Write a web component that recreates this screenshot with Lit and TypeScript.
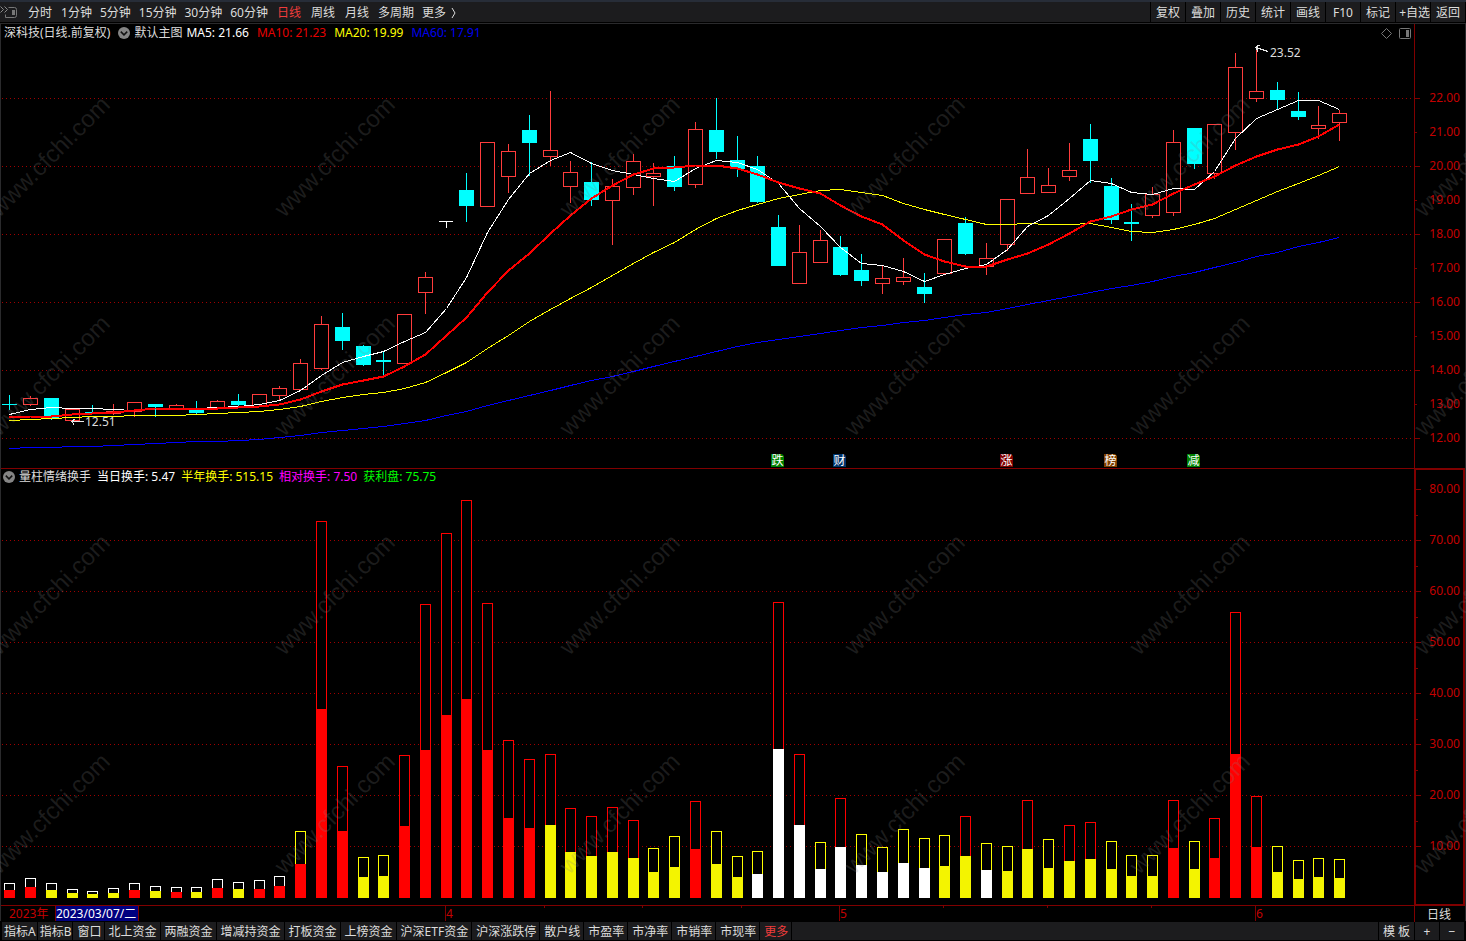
import { LitElement, html, svg, css } from "lit";
import { customElement, property } from "lit/decorators.js";
import { styleMap } from "lit/directives/style-map.js";

type Candle = [kind: "u" | "d" | "t", high: number, top: number, bottom: number, low: number];
type Bar = [top: number, split: number, colors: string];

/* Horizontal position of the k-th trading day. */
const dayX = (k: number) => Math.floor(9.8 + (k * 187) / 9);

const PLOT_W = 1414;
const MAIN_TOP = 24;
const MAIN_H = 444;
const SUB_TOP = 469;
const SUB_H = 436;

const candles: Candle[] = [
  ["d", 395, 404, 405, 410], ["u", 396, 398, 405, 406], ["d", 398, 398, 418, 420], ["u", 409, 409, 421, 421],
  ["d", 405, 412, 413, 414], ["u", 404, 411, 414, 415], ["u", 402, 402, 412, 417], ["d", 404, 404, 407, 417],
  ["u", 404, 405, 409, 409], ["d", 401, 409, 413, 414], ["u", 400, 401, 408, 408], ["d", 394, 401, 405, 406],
  ["u", 394, 394, 407, 407], ["u", 386, 388, 396, 400], ["u", 359, 363, 390, 390], ["u", 316, 324, 369, 370],
  ["d", 313, 327, 341, 350], ["d", 345, 346, 365, 366], ["d", 351, 360, 362, 375], ["u", 314, 314, 364, 364],
  ["u", 272, 277, 293, 314], ["t", 221, 221, 222, 228], ["d", 173, 190, 206, 222], ["u", 142, 142, 207, 207],
  ["u", 144, 151, 177, 193], ["d", 115, 130, 143, 176], ["u", 91, 150, 157, 166], ["u", 161, 172, 187, 203],
  ["d", 162, 182, 200, 206], ["u", 179, 186, 201, 245], ["u", 154, 161, 188, 195], ["u", 163, 173, 177, 206],
  ["d", 156, 166, 187, 191], ["u", 122, 129, 185, 188], ["d", 98, 130, 152, 159], ["d", 136, 160, 169, 177],
  ["d", 156, 166, 202, 203], ["d", 215, 227, 266, 266], ["u", 225, 252, 284, 284], ["u", 230, 240, 263, 263],
  ["d", 236, 247, 275, 276], ["d", 254, 270, 281, 286], ["u", 266, 278, 284, 294], ["u", 258, 277, 282, 285],
  ["d", 273, 287, 294, 303], ["u", 239, 239, 274, 275], ["d", 217, 223, 254, 255], ["u", 243, 258, 267, 275],
  ["u", 199, 199, 245, 251], ["u", 149, 177, 194, 194], ["u", 168, 185, 193, 193], ["u", 143, 170, 177, 181],
  ["d", 124, 139, 161, 183], ["d", 178, 186, 220, 224], ["d", 204, 222, 224, 241], ["u", 187, 194, 216, 218],
  ["u", 130, 142, 213, 216], ["d", 128, 128, 164, 169], ["u", 124, 124, 174, 179], ["u", 53, 67, 133, 150],
  ["u", 48, 91, 99, 102], ["d", 82, 90, 100, 110], ["d", 92, 111, 117, 120], ["u", 106, 125, 129, 139],
  ["u", 110, 113, 123, 141],
];

const ma5 = [414, 409, 407, 408, 408, 409, 410, 408, 408, 408, 407, 406, 404, 400, 390, 375, 362, 356, 351, 341, 332, 308, 277, 232, 199, 173, 160, 152, 163, 170, 174, 178, 181, 168, 160, 162, 169, 183, 208, 226, 247, 263, 265, 271, 281, 274, 268, 264, 249, 226, 215, 198, 180, 183, 192, 194, 188, 189, 171, 138, 118, 109, 100, 100, 109];
const ma10 = [417, 416, 416, 414, 413, 412, 410, 408, 408, 408, 408, 407, 406, 404, 399, 391, 384, 380, 376, 366, 354, 335, 317, 292, 270, 253, 233, 215, 198, 185, 174, 168, 167, 165, 165, 168, 174, 182, 188, 193, 205, 216, 224, 240, 254, 261, 266, 266, 259, 253, 244, 233, 221, 216, 209, 204, 193, 184, 176, 165, 156, 149, 144, 136, 124];
const ma20 = [420, 419, 418, 417, 416, 416, 415, 415, 415, 414, 413, 412, 411, 409, 406, 401, 397, 394, 392, 388, 382, 372, 362, 348, 335, 321, 309, 298, 287, 275, 263, 252, 242, 229, 218, 210, 204, 198, 194, 190, 189, 192, 195, 203, 209, 214, 219, 224, 224, 223, 224, 224, 223, 227, 231, 232, 229, 224, 218, 209, 200, 191, 183, 175, 166];
const ma60 = [448, 447, 447, 446, 446, 445, 444, 443, 442, 441, 441, 440, 439, 437, 435, 432, 430, 428, 426, 423, 420, 415, 411, 405, 400, 395, 390, 385, 380, 376, 371, 366, 361, 356, 351, 346, 342, 339, 336, 333, 330, 327, 325, 322, 320, 317, 314, 312, 308, 304, 300, 296, 292, 288, 285, 281, 276, 272, 267, 262, 256, 252, 246, 242, 237];

/* Two letters per bar: outline colour, then fill colour. */
const bars: Bar[] = [
  [883, 890, "WR"], [878, 887, "WR"], [883, 890, "WY"], [889, 893, "WY"], [891, 894, "WY"], [888, 893, "WY"],
  [883, 890, "WR"], [886, 891, "WY"], [887, 892, "WR"], [887, 892, "WY"], [879, 888, "WR"], [882, 889, "WY"],
  [880, 889, "WR"], [876, 886, "WR"], [831, 864, "YR"], [521, 709, "RR"], [766, 831, "RR"], [857, 877, "YY"],
  [855, 876, "YY"], [755, 826, "RR"], [604, 750, "RR"], [533, 715, "RR"], [500, 699, "RR"], [603, 750, "RR"],
  [740, 818, "RR"], [759, 828, "RR"], [754, 825, "RY"], [808, 852, "RY"], [816, 856, "RY"], [807, 852, "RY"],
  [820, 858, "RY"], [848, 872, "YY"], [836, 867, "YY"], [801, 849, "RR"], [831, 864, "YY"], [856, 877, "YY"],
  [851, 874, "YW"], [602, 749, "RW"], [754, 825, "RW"], [842, 869, "YW"], [798, 847, "RW"], [834, 865, "YW"],
  [847, 872, "YW"], [829, 863, "YW"], [838, 868, "YW"], [835, 866, "YY"], [816, 856, "RY"], [843, 870, "YW"],
  [846, 871, "YY"], [800, 849, "RY"], [839, 868, "YY"], [825, 861, "RY"], [822, 859, "RY"], [841, 869, "YY"],
  [855, 876, "YY"], [855, 876, "YY"], [800, 848, "RR"], [841, 869, "YY"], [818, 858, "RR"], [612, 754, "RR"],
  [796, 847, "RR"], [846, 872, "YY"], [860, 879, "YY"], [858, 877, "YY"], [859, 878, "YY"],
];
const BAR_BASE = 898;

const events = [
  { day: 37, text: "跌", tone: "green" },
  { day: 40, text: "财", tone: "navy" },
  { day: 48, text: "涨", tone: "maroon" },
  { day: 53, text: "榜", tone: "brown" },
  { day: 57, text: "减", tone: "green" },
];

const pct = (v: number, total: number) => `${(v / total) * 100}%`;

const path = (ys: number[]) => ys.map((y, k) => `${dayX(k) + 0.5},${y + 0.5}`).join(" ");

const chevronIcon = html`<svg class="chev" viewBox="0 0 13 13" width="12" height="12" aria-hidden="true">
  <circle cx="6.5" cy="6.5" r="6.5" fill="#858585" />
  <path d="M3 5l3.5 3.5L10 5" fill="none" stroke="#111" stroke-width="1.6" />
</svg>`;

const base = css`
  * { box-sizing: border-box; }
  button {
    appearance: none;
    border: 0;
    margin: 0;
    padding: 0;
    font: inherit;
    color: inherit;
    background: none;
    white-space: nowrap;
    cursor: pointer;
  }
`;

@customElement("top-bar")
export class TopBar extends LitElement {
  static styles = [base, css`
    :host {
      display: flex;
      height: 24px;
      border-top: 2px solid #272d38;
      border-bottom: 1px solid #2a2a2c;
      background: #000;
      color: #dcdcdc;
      padding: 0 1px 1px 0;
    }
    .left { flex: 1; display: flex; align-items: stretch; background: #1c1c1e; min-width: 0; overflow: hidden; }
    .left button { padding-top: 2px; }
    .left .dock { width: 23px; flex: none; display: flex; align-items: center; padding: 0; }
    .left .wide { padding-left: 5px; padding-right: 5px; }
    .left .slim { padding-left: 4px; padding-right: 4px; }
    .active { color: #f03c3c; }
    .right { display: flex; gap: 1px; padding-left: 1px; }
    .right button { width: 34px; padding-top: 2px; background: #1c1c1e; overflow: hidden; display: flex; justify-content: center; align-items: center; }
    .right .end { justify-content: flex-end; }
  `];

  render() {
    const tf: [string, string][] = [
      ["分时", "wide"], ["1分钟", "slim"], ["5分钟", "slim"], ["15分钟", "slim"], ["30分钟", "slim"], ["60分钟", "slim"],
      ["日线", "wide active"], ["周线", "wide"], ["月线", "wide"], ["多周期", "slim"], ["更多", "slim"],
    ];
    const tools = ["复权", "叠加", "历史", "统计", "画线", "F10", "标记", "+自选", "返回"];
    return html`
      <nav class="left">
        <button class="dock" aria-label="展开侧栏">
          <svg width="18" height="14" viewBox="0 0 18 14">
            <path d="M8.5 2.5h6q2 0 2 2v6q0 2-2 2h-9v-3" fill="none" stroke="#777" />
            <rect x="12" y="5" width="3" height="5" fill="#777" />
            <path d="M0.5 1.5l3 3-3 3M4.5 1.5l3 3-3 3" fill="none" stroke="#8a8a8a" />
          </svg>
        </button>
        ${tf.map(([t, c]) => html`<button class=${c}>${t}</button>`)}
        <svg width="8" height="20" viewBox="0 0 8 20" aria-hidden="true"><path d="M2 6l3 5-3 5" fill="none" stroke="#dcdcdc" /></svg>
      </nav>
      <div class="right">${tools.map((t) => html`<button class=${t === "+自选" ? "end" : ""}>${t}</button>`)}</div>
    `;
  }
}

@customElement("value-axis")
export class ValueAxis extends LitElement {
  @property({ attribute: false }) labels: string[] = [];
  @property({ attribute: false }) major: number[] = [];
  @property({ attribute: false }) minor: number[] = [];
  @property({ type: Number }) origin = 0;
  @property({ type: Number }) span = 1;
  @property() rows = "";

  static styles = [base, css`
    :host { display: grid; position: relative; color: #c40000; min-height: 0; }
    svg { position: absolute; inset: 0; width: 100%; height: 100%; }
    .labels { display: grid; text-align: right; padding-right: var(--label-inset, 6px); min-height: 0; }
    .labels span { line-height: 16px; margin-top: -8px; }
  `];

  render() {
    return html`
      <svg viewBox="0 ${this.origin} 52 ${this.span}" preserveAspectRatio="none" shape-rendering="crispEdges" aria-hidden="true">
        ${this.major.map((y) => svg`<rect x="0" y=${y} width="5" height="1" fill="#800000" />`)}
        ${this.minor.map((y) => svg`<rect x="0" y=${y} width="2" height="1" fill="#800000" />`)}
      </svg>
      <div class="labels" style=${styleMap({ gridTemplateRows: this.rows })}>
        <i></i>${this.labels.map((l) => html`<span>${l}</span>`)}
      </div>
    `;
  }
}

@customElement("price-panel")
export class PricePanel extends LitElement {
  static styles = [base, css`
    :host { display: grid; grid-template-columns: minmax(0, 1fr) 52px; border-bottom: 1px solid #800000; min-height: 0; }
    .plot { position: relative; min-height: 0; min-width: 0; overflow: hidden; }
    .chart { position: absolute; inset: 0; width: 100%; height: 100%; }
    .axis { border-left: 1px solid #800000; }
    .legend { position: absolute; left: 4px; top: 0; height: 18px; display: flex; align-items: center; gap: 8px; white-space: nowrap; color: #dcdcdc; }
    .group { display: flex; align-items: center; gap: 4px; }
    .values { display: flex; gap: 8px; }
    .chev { display: block; }
    .white { color: #fff; }
    .red { color: #e60000; }
    .yellow { color: #ff0; }
    .blue { color: #0000f0; }
    .corner { position: absolute; right: 3px; top: 3px; display: flex; gap: 6px; }
    .corner button { display: block; height: 13px; }
    .note { position: absolute; color: #dcdcdc; line-height: 16px; margin-top: -8px; }
    .badge {
      position: absolute; bottom: 1px; width: 13px; height: 13px; margin-left: -7px;
      display: grid; place-items: center; font-size: 12px; line-height: 13px; color: #fff;
      clip-path: polygon(0 0, 11px 0, 100% 2px, 100% 100%, 0 100%);
    }
    .green { background: #008000; }
    .navy { background: #00336a; }
    .maroon { background: #800000; }
    .brown { background: #804000; }
  `];

  private candle([kind, high, top, bottom, low]: Candle, k: number) {
    const x = dayX(k);
    if (kind === "u") {
      return svg`
        <rect x=${x} y=${high} width="1" height=${low - high} fill="#ff3c3c" />
        <rect x=${x - 6.5} y=${top + 0.5} width="14" height=${bottom - top - 1} fill="#000" stroke="#ff3c3c" />`;
    }
    const c = kind === "d" ? "#00ffff" : "#ffffff";
    return svg`
      <rect x=${x} y=${high} width="1" height=${low - high} fill=${c} />
      <rect x=${x - 7} y=${top} width=${kind === "d" ? 15 : 14} height=${bottom - top} fill=${c} />`;
  }

  render() {
    const grid = [98, 166, 234, 302, 370, 438];
    const labels = ["22", "21", "20", "19", "18", "17", "16", "15", "14", "13", "12"].map((v) => `${v}.00`);
    return html`
      <div class="plot">
        <svg class="chart" viewBox="0 ${MAIN_TOP} ${PLOT_W} ${MAIN_H}" preserveAspectRatio="none" shape-rendering="crispEdges" aria-label="K线图">
          ${grid.map((y) => svg`<path d="M2 ${y + 0.5}H1413" stroke="#a00000" stroke-dasharray="1 3" />`)}
          ${candles.map((c, k) => this.candle(c, k))}
          <polyline points=${path(ma60)} fill="none" stroke="#0000ff" />
          <polyline points=${path(ma20)} fill="none" stroke="#ffff00" />
          <polyline points=${path(ma5)} fill="none" stroke="#ffffff" />
          <polyline points=${path(ma10)} fill="none" stroke="#ff0000" stroke-width="2" />
          <path d="M72 421.5H84M75 419.5h-1l-2 2l2 3" fill="none" stroke="#e8e8e8" />
          <path d="M1256 47.5L1268 51.5M1260 45.5h-2l-2 2l2 4" fill="none" stroke="#e8e8e8" />
        </svg>
        <div class="legend">
          <span>深科技(日线.前复权)</span>
          <div class="group">
            ${chevronIcon}
            <span>默认主图</span>
            <div class="values">
              <span class="white">MA5: 21.66</span>
              <span class="red">MA10: 21.23</span>
              <span class="yellow">MA20: 19.99</span>
              <span class="blue">MA60: 17.91</span>
            </div>
          </div>
        </div>
        <div class="corner">
          <button aria-label="标记">
            <svg width="13" height="13" viewBox="0 0 13 13"><path d="M7.5 1.5l5 5-5 5-5-5z" fill="none" stroke="#777" /></svg>
          </button>
          <button aria-label="侧栏">
            <svg width="13" height="13" viewBox="0 0 13 13"><rect x="1.5" y="1.5" width="11" height="10" rx="1" fill="none" stroke="#777" /><rect x="8" y="3" width="3" height="7" fill="#777" /></svg>
          </button>
        </div>
        <span class="note" style=${styleMap({ left: pct(85, PLOT_W), top: pct(422 - MAIN_TOP, MAIN_H) })}>12.51</span>
        <span class="note" style=${styleMap({ left: pct(1270, PLOT_W), top: pct(53 - MAIN_TOP, MAIN_H) })}>23.52</span>
        ${events.map((e) => html`<span class="badge ${e.tone}" style=${styleMap({ left: pct(dayX(e.day), PLOT_W) })}>${e.text}</span>`)}
      </div>
      <value-axis class="axis" .labels=${labels} .major=${grid} .minor=${[132, 200, 268, 336, 404]}
        .origin=${MAIN_TOP} .span=${MAIN_H}
        .rows=${"minmax(0,74fr) repeat(10,minmax(0,34fr)) minmax(0,30fr)"}></value-axis>
    `;
  }
}

@customElement("turnover-panel")
export class TurnoverPanel extends LitElement {
  static styles = [base, css`
    :host { display: grid; grid-template-columns: minmax(0, 1fr) 52px; min-height: 0; }
    .plot { position: relative; min-height: 0; min-width: 0; overflow: hidden; border-bottom: 1px solid #800000; }
    .chart { position: absolute; inset: 0; width: 100%; height: 100%; }
    .box { border: 2px solid #800000; border-top-width: 1px; margin-right: 1px; min-height: 0; display: grid; }
    .axis { --label-inset: 3px; }
    .legend { position: absolute; left: 3px; top: 0; height: 16px; display: flex; align-items: center; gap: 6px; white-space: nowrap; color: #dcdcdc; }
    .name { display: flex; align-items: center; gap: 4px; }
    .chev { display: block; }
    .white { color: #fff; }
    .yellow { color: #ff0; }
    .magenta { color: #f0f; }
    .green { color: #0f0; }
  `];

  private bar([top, split, colors]: Bar, k: number) {
    const x = dayX(k) - 5;
    const line: Record<string, string> = { W: "#ffffff", Y: "#ffff00", R: "#ff0000" };
    const fill: Record<string, string> = { W: "#ffffff", Y: "#f4f400", R: "#ff0000" };
    return svg`
      <rect x=${x + 0.5} y=${top + 0.5} width="10" height=${BAR_BASE - top - 1} fill="#000" stroke=${line[colors[0]]} />
      <rect x=${x} y=${split} width="11" height=${BAR_BASE - split} fill=${fill[colors[1]]} />`;
  }

  render() {
    const grid = [540, 591, 642, 693, 744, 795, 846];
    return html`
      <div class="plot">
        <svg class="chart" viewBox="0 ${SUB_TOP} ${PLOT_W} ${SUB_H}" preserveAspectRatio="none" shape-rendering="crispEdges" aria-label="换手柱图">
          ${grid.map((y) => svg`<path d="M2 ${y + 0.5}H1413" stroke="#a00000" stroke-dasharray="1 3" />`)}
          ${bars.map((b, k) => this.bar(b, k))}
        </svg>
        <div class="legend">
          <div class="name">${chevronIcon}<span>量柱情绪换手</span></div>
          <span class="white">当日换手: 5.47</span>
          <span class="yellow">半年换手: 515.15</span>
          <span class="magenta">相对换手: 7.50</span>
          <span class="green">获利盘: 75.75</span>
        </div>
      </div>
      <div class="box">
        <value-axis class="axis" .labels=${["80", "70", "60", "50", "40", "30", "20", "10"].map((v) => `${v}.00`)}
          .major=${[489, ...grid]} .minor=${[515, 566, 617, 668, 719, 770, 821]}
          .origin=${SUB_TOP + 1} .span=${SUB_H - 2}
          .rows=${"minmax(0,19fr) repeat(8,minmax(0,51fr)) minmax(0,7fr)"}></value-axis>
      </div>
    `;
  }
}

@customElement("date-axis")
export class DateAxis extends LitElement {
  static styles = [base, css`
    :host { display: grid; grid-template-columns: minmax(0, 1fr) 52px; height: 16px; color: #c40000; line-height: 15px; }
    .track { position: relative; display: flex; padding-left: 9px; gap: 5px; white-space: nowrap; }
    .chart { position: absolute; inset: 0; width: 100%; height: 100%; }
    .year { width: 41px; }
    .day { height: 15px; background: #000080; color: #fff; border: solid #800000; border-width: 0 1px; padding: 0 2px 0 0; }
    .month { position: absolute; top: 0; }
    .period { border-left: 1px solid #800000; color: #dcdcdc; padding-left: 12px; text-align: left; line-height: 15px; }
  `];

  render() {
    const months: [number, string][] = [[445, "4"], [839, "5"], [1255, "6"]];
    return html`
      <div class="track">
        <svg class="chart" viewBox="0 0 ${PLOT_W} 16" preserveAspectRatio="none" shape-rendering="crispEdges" aria-hidden="true">
          ${months.map(([x]) => svg`<rect x=${x} y="0" width="1" height="15" fill="#800000" />`)}
          ${[544, 642, 741, 943, 1047, 1151].map((x) => svg`<rect x=${x} y="0" width="1" height="2" fill="#800000" />`)}
        </svg>
        <span class="year">2023年</span>
        <span class="day">2023/03/07/二</span>
        ${months.map(([x, t]) => html`<span class="month" style=${styleMap({ left: pct(x + 1, PLOT_W) })}>${t}</span>`)}
      </div>
      <button class="period">日线</button>
    `;
  }
}

@customElement("bottom-bar")
export class BottomBar extends LitElement {
  static styles = [base, css`
    :host { display: flex; gap: 1px; height: 19px; padding: 0 2px 1px 2px; background: #000; color: #dcdcdc; line-height: 17px; }
    button, .fill { background: #1c1c1e; padding: 0 3px 0 4px; flex: none; }
    .tight { padding: 0 1px 0 2px; }
    .short { padding: 0 2px 0 4px; }
    .hot { color: #f03c3c; }
    .fill { flex: 1; min-width: 0; }
    .tpl { width: 35px; padding: 0; }
    .sign { width: 24px; padding: 0; }
  `];

  render() {
    const items = ["北上资金", "两融资金", "增减持资金", "打板资金", "上榜资金", "沪深ETF资金", "沪深涨跌停", "散户线", "市盈率", "市净率", "市销率", "市现率"];
    return html`
      <button class="tight">指标A</button>
      <button class="tight">指标B</button>
      <button class="short">窗口</button>
      ${items.map((t) => html`<button>${t}</button>`)}
      <button class="hot">更多</button>
      <div class="fill"></div>
      <button class="tpl">模 板</button>
      <button class="sign">+</button>
      <button class="sign">−</button>
    `;
  }
}

@customElement("app-root")
export class AppRoot extends LitElement {
  static styles = [base, css`
    :host {
      display: grid;
      grid-template-rows: 24px minmax(0, 445fr) minmax(0, 437fr) 16px 19px;
      height: 100vh;
      position: relative;
      overflow: hidden;
      background: #000;
      font: 12px/16px "Noto Sans", "Noto Sans CJK SC", sans-serif;
    }
    .edge { position: absolute; top: 24px; bottom: 20px; left: 0; right: 0; border: solid #2a2a2c; border-width: 0 1px; pointer-events: none; }
    .watermark { position: absolute; inset: 0; width: 100%; height: 100%; pointer-events: none; }
    .watermark text { font: 24px "Liberation Sans", sans-serif; fill: rgba(128, 128, 128, 0.22); text-anchor: middle; }
  `];

  render() {
    const marks = [0, 1, 2, 3].flatMap((r) => [0, 1, 2, 3, 4, 5].map((c) => [51 + c * 285, 158 + r * 219]));
    return html`
      <top-bar></top-bar>
      <price-panel></price-panel>
      <turnover-panel></turnover-panel>
      <date-axis></date-axis>
      <bottom-bar></bottom-bar>
      <div class="edge"></div>
      <svg class="watermark" aria-hidden="true">
        ${marks.map(([x, y]) => svg`<text transform="translate(${x} ${y}) rotate(-45)" y="6">www.cfchi.com</text>`)}
      </svg>
    `;
  }
}
